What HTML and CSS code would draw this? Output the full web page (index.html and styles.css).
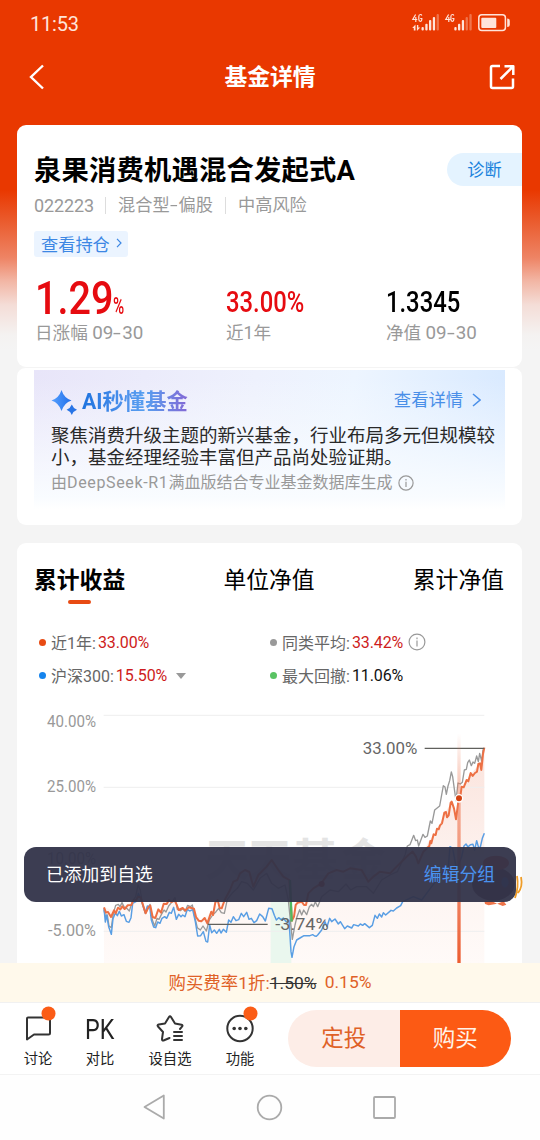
FILE: index.html
```html
<!DOCTYPE html>
<html lang="zh-CN">
<head>
<meta charset="utf-8">
<title>基金详情</title>
<link rel="stylesheet" href="styles.css">
</head>
<body>
<div class="screen">
  <header class="status">
    <span class="clock">11:53</span>
    <svg class="signals" width="100" height="20" viewBox="410 12 100 20">
      <g fill="none" stroke="#ffe4da" stroke-width="1.2">
        <path d="M415.6 14.5L412.8 19.5H417.3M415.8 17V22M421.8 15.5Q421.5 14.5 420.4 14.5Q418.8 14.5 418.8 16.5V19.3Q418.8 21.3 420.4 21.3Q421.8 21.3 421.8 19.5V18.5H420.2"/>
        <path d="M448.6 14.5L445.8 19.5H450.3M448.8 17V22M453.8 15.5Q453.5 14.5 452.4 14.5Q450.9 14.5 450.9 16.5V19.3Q450.9 21.3 452.4 21.3Q453.8 21.3 453.8 19.5V18.5H452.2"/>
      </g>
      <g fill="#ffe4da">
        <path d="M412.2 28L415.5 24.4V30.5H413.8V28ZM420.2 27.5L416.9 31V25H418.3V27.5Z"/>
        <rect x="421.5" y="27" width="2.3" height="3.5" rx="1"/><rect x="425.3" y="23.7" width="2.3" height="6.8" rx="1"/><rect x="429" y="20" width="2.3" height="10.5" rx="1"/><rect x="432.8" y="17" width="2.3" height="13.5" rx="1"/>
        <rect x="454.3" y="27" width="2.3" height="3.5" rx="1"/><rect x="458" y="23.7" width="2.3" height="6.8" rx="1"/><rect x="461.8" y="20" width="2.3" height="10.5" rx="1"/>
        <g opacity=".35"><rect x="436.6" y="14" width="2.3" height="16.5" rx="1"/><rect x="465.6" y="17" width="2.3" height="13.5" rx="1"/><rect x="469.4" y="14" width="2.3" height="16.5" rx="1"/></g>
        <rect x="481.3" y="17.7" width="15" height="10.3" rx="1"/><path d="M507.2 18.5q2.6 0 2.6 2.5v3.5q0 2.5-2.6 2.5z"/>
      </g>
      <rect x="478.8" y="14.8" width="26.6" height="15.6" rx="3" fill="none" stroke="#ffe4da" stroke-width="1.5"/>
    </svg>
  </header>
  <nav class="nav">
    <svg width="16" height="26" viewBox="0 0 16 26" fill="none" stroke="#fff" stroke-width="2.4"><path d="M14 1.5L2 13L14 24.5"/></svg>
    <h1 class="nav-title">基金详情</h1>
    <svg width="26" height="26" viewBox="0 0 26 26" fill="none" stroke="#fff" stroke-width="2.5" stroke-linejoin="round"><path d="M11 2H3.5Q2 2 2 3.5V22.5Q2 24 3.5 24H22.5Q24 24 24 22.5V14.5"/><path d="M11.5 15L23.5 3M15.5 2.2H24.3V11"/></svg>
  </nav>

  <main class="content">
    <section class="card summary">
      <div class="title-row"><h2 class="fund-name">泉果消费机遇混合发起式A</h2><a class="diagnose">诊断</a></div>
      <div class="meta"><span class="code">022223</span><span class="kind">混合型<i class="dash">-</i>偏股</span><span class="risk">中高风险</span></div>
      <a class="holding">查看持仓<svg width="6" height="10" viewBox="0 0 6 10" fill="none" stroke="#3c87e4" stroke-width="1.2"><path d="M1 .8L5 5L1 9.2"/></svg></a>
      <div class="stats">
        <div class="stat"><div class="value red"><b class="big">1.29</b><b class="pct">%</b></div><div class="label">日涨幅 <i>09<em>-</em>30</i></div></div>
        <div class="stat"><div class="value red"><b class="mid">33.00%</b></div><div class="label">近1年</div></div>
        <div class="stat"><div class="value"><b class="mid">1.3345</b></div><div class="label">净值 <i>09<em>-</em>30</i></div></div>
      </div>
    </section>

    <section class="card ai">
      <div class="ai-box">
        <div class="ai-head">
          <svg width="27" height="26" viewBox="0 0 27 26"><defs><linearGradient id="spark"><stop offset="0" stop-color="#55a0ff"/><stop offset="1" stop-color="#216ee9"/></linearGradient></defs><path fill="url(#spark)" d="M10.5 0Q13 8 20.5 10.5Q13 13 10.5 21Q8 13 .5 10.5Q8 8 10.5 0Z"/><path fill="#2874e6" d="M20.8 14.5Q22.2 18.3 26 19.7Q22.2 21.1 20.8 25Q19.4 21.1 15.6 19.7Q19.4 18.3 20.8 14.5Z"/></svg>
          <span class="ai-title">AI秒懂基金</span>
          <a class="ai-more">查看详情<svg width="9" height="14" viewBox="0 0 9 14" fill="none" stroke="#4a8fe8" stroke-width="1.5"><path d="M1 1L8 7L1 13"/></svg></a>
        </div>
        <p class="ai-text">聚焦消费升级主题的新兴基金，行业布局多元但规模较<br>小，基金经理经验丰富但产品尚处验证期。</p>
        <div class="ai-source"><span>由<i>DeepSeek-R1</i>满血版结合专业基金数据库生成</span><svg width="16" height="16" viewBox="0 0 16 16" fill="none" stroke="#999" stroke-width="1.2"><circle cx="8" cy="8" r="7.1"/><path d="M8 6.8V12M8 4V5.5"/></svg></div>
      </div>
    </section>

    <section class="card trend">
      <div class="tabs"><a class="tab active">累计收益</a><a class="tab">单位净值</a><a class="tab">累计净值</a></div>
      <div class="legend">
        <div class="item"><i class="dot orange"></i><span>近1年:</span><b class="red">33.00%</b></div>
        <div class="item"><i class="dot grey"></i><span>同类平均:</span><b class="red">33.42%</b><svg class="info" width="18" height="18" viewBox="0 0 18 18" fill="none" stroke="#999" stroke-width="1.2"><circle cx="9" cy="9" r="7.9"/><path d="M9 7.6V13.5M9 4.5V6.2"/></svg></div>
        <div class="item"><i class="dot blue"></i><span>沪深300:</span><b class="red">15.50%</b><i class="caret"></i></div>
        <div class="item"><i class="dot green"></i><span>最大回撤:</span><b>11.06%</b></div>
      </div>
      <svg class="chart" width="505" height="263" viewBox="51 0 1515 789">
        <defs>
          <linearGradient id="area" x1="0" y1="0" x2="0" y2="1"><stop offset="0" stop-color="#fbe3dc"/><stop offset=".6" stop-color="#fdf4f1"/><stop offset="1" stop-color="#fffaf8"/></linearGradient>
          <linearGradient id="beam" x1="0" y1="0" x2="0" y2="1"><stop offset="0" stop-color="#ee7651" stop-opacity="0"/><stop offset=".3" stop-color="#ee7651" stop-opacity=".55"/><stop offset="1" stop-color="#ec5c30"/></linearGradient>
        </defs>
        <path fill="url(#area)" d="M312 622L345 632L405 600L420 590L437 640L466 655L492 612L526 590L536 630L580 625L604 664L634 635L690 570L735 510L800 500L868 540L876 660L893 608L925 580L975 525L1030 515L1105 545L1170 520L1238 455L1255 490L1285 425L1300 405L1318 375L1334 340L1356 305L1368 355L1384 270L1415 220L1440 190L1453 143V789H312Z"/>
        <rect x="812" y="560" width="62" height="229" fill="#eaf7ee"/>
        <path d="M311 46H1453M311 262H1453M311 478H1453M311 694H1453" stroke="#eee" stroke-width="3"/>
        <text class="mark" x="614 742 878 1024" y="528">天天基金</text>
        <g class="axis"><text x="141" y="81" textLength="147" lengthAdjust="spacingAndGlyphs">40.00%</text><text x="141" y="277" textLength="147" lengthAdjust="spacingAndGlyphs">25.00%</text><text x="141" y="493" textLength="147" lengthAdjust="spacingAndGlyphs">10.00%</text><text x="144" y="709" textLength="144" lengthAdjust="spacingAndGlyphs">-5.00%</text></g>
        <g fill="none" stroke-linejoin="round">
          <path stroke="#999" stroke-width="4" d="M312 630L317 652L322 645L327 678L334 683L340 640L347 616L355 613L360 620L366 608L373 622L380 625L388 633L397 605L407 590L414 555L421 570L427 612L436 640L444 625L450 613L457 660L464 678L471 655L477 658L484 644L492 630L498 636L506 618L517 605L525 592L532 628L541 632L548 626L555 634L563 616L571 620L577 615L584 650L592 683L601 690L609 678L619 693L628 660L638 645L648 635L656 625L664 638L673 640L682 598L696 580L712 565L725 545L742 550L760 570L780 535L800 520L815 550L835 565L855 555L865 600L872 670L877 718L885 675L891 650L899 629L905 645L911 630L920 644L928 620L935 613L940 620L946 605L953 620L965 590L990 570L1015 575L1038 552L1052 570L1070 560L1100 560L1120 580L1145 540L1170 525L1192 515L1215 465L1222 438L1230 434L1241 406L1247 422L1252 420L1256 438L1269 403L1275 412L1282 408L1291 363L1296 370L1304 330L1319 318L1330 257L1335 261L1339 283L1344 258L1349 242L1354 216L1358 230L1362 260L1368 302L1374 249L1381 252L1387 247L1393 210L1399 208L1403 188L1408 180L1414 197L1419 186L1424 190L1430 168L1435 185L1439 160L1445 183L1449 150L1453 145"/>
          <path stroke="#599ee4" stroke-width="4.4" d="M312 625L316 666L320 645L326 680L334 703L339 656L346 639L352 647L358 634L364 648L372 644L379 664L387 667L393 653L398 610L408 605L415 580L424 600L436 638L442 618L449 620L454 660L461 681L467 683L473 666L480 670L486 655L494 650L500 655L508 637L514 640L521 622L529 658L536 643L543 650L548 645L555 650L562 628L569 633L578 629L586 665L593 708L602 707L610 695L618 724L623 726L629 675L635 698L643 690L650 700L658 688L663 699L670 688L679 697L686 660L693 667L700 650L708 662L716 659L724 640L731 650L740 637L747 658L754 655L762 668L770 662L779 642L788 650L796 663L806 625L816 626L823 646L829 660L836 653L843 659L850 654L858 665L867 661L873 755L876 772L882 740L890 720L900 714L912 707L930 707L938 704L944 708L949 709L953 705L965 690L975 665L981 680L989 655L995 665L1005 657L1015 672L1021 665L1034 686L1042 678L1055 684L1061 674L1075 678L1081 672L1088 676L1094 671L1108 683L1117 676L1125 646L1132 655L1138 642L1145 651L1150 638L1157 645L1173 631L1180 633L1190 624L1202 617L1208 605L1240 590L1265 600L1295 560L1315 535L1345 500L1350 440L1358 445L1370 510L1385 470L1392 438L1398 432L1404 441L1411 434L1419 433L1424 450L1430 422L1435 440L1440 445L1447 415L1453 400"/>
          <path stroke="#ed7044" stroke-width="6" d="M312 622L318 638L324 636L333 651L342 631L347 640L354 623L361 628L367 619L374 627L383 616L394 615L400 601L408 600L414 590L422 592L429 615L437 640L445 622L451 617L458 651L466 654L475 628L483 638L491 611L500 612L507 600L514 606L524 602L530 614L536 630L548 624L556 632L566 622L582 626L588 651L596 662L604 664L614 654L622 670L634 635L639 645L646 607L653 600L659 624L665 625L674 600L690 570L700 545L712 540L720 520L735 510L748 516L760 560L775 525L800 500L815 480L835 510L850 530L868 540L876 662L882 650L887 615L893 608L905 605L912 615L918 615L925 580L940 565L964 550L985 520L1010 510L1030 515L1050 505L1085 510L1105 545L1120 530L1140 515L1170 520L1190 500L1210 480L1225 465L1238 455L1248 470L1255 490L1270 455L1288 438L1291 423L1294 430L1301 403L1307 405L1311 386L1316 388L1320 376L1326 370L1333 338L1338 336L1341 352L1346 346L1352 308L1355 305L1362 325L1368 358L1375 305L1380 297L1385 260L1391 262L1400 240L1405 244L1412 219L1418 228L1425 219L1431 215L1435 192L1440 190L1444 210L1449 162L1453 143"/>
          <path stroke="#50b960" stroke-width="7" d="M870 540L875 665"/>
          <path stroke="#60605c" stroke-width="3.5" d="M1274 145H1453M623 673H803"/>
        </g>
        <text class="note" x="1088" y="162" textLength="164" lengthAdjust="spacingAndGlyphs">33.00%</text>
        <text class="note" x="826" y="691" textLength="160" lengthAdjust="spacingAndGlyphs">-3.74%</text>
        <rect x="1372" y="100" width="10" height="689" fill="url(#beam)"/>
        <circle cx="1377" cy="295" r="11" fill="#d34313" stroke="#fff" stroke-width="4"/>
        <circle cx="965" cy="552" r="9" fill="#d34313"/>
        <g><ellipse cx="1480" cy="552" rx="64" ry="50" fill="#65443d"/><ellipse cx="1488" cy="489" rx="39" ry="22" fill="#dd5534"/><ellipse cx="1515" cy="547" rx="11" ry="16" fill="#365ca8"/><path fill="#ed7348" d="M1453 603H1475L1491 611L1511 604L1519 614L1508 618L1492 611L1466 616L1455 612Z"/></g>
      </svg>
      <svg class="tail" width="14" height="36" viewBox="514 870 14 36" fill="none" stroke="#ef9d28" stroke-width="1.8"><path d="M517 876Q519 887 515 898M521 877Q523 887 518 893"/></svg>
    </section>
  </main>

  <aside class="toast"><span>已添加到自选</span><a>编辑分组</a></aside>

  <div class="fee"><span>购买费率1折:<s>1.50%</s></span><span>0.15%</span></div>
  <footer class="actions">
    <a class="action"><svg width="36" height="38" viewBox="20 1005 36 38" fill="none" stroke="#333" stroke-width="2" stroke-linejoin="round"><path d="M28 1017.5H48.5Q50 1017.5 50 1019V1033Q50 1034.5 48.5 1034.5H34L27 1039.5V1018.5Q27 1017.5 28 1017.5Z"/><circle cx="48.5" cy="1013.5" r="7" fill="#fb5c16" stroke="none"/></svg><span>讨论</span></a>
    <a class="action"><b class="pk">PK</b><span>对比</span></a>
    <a class="action"><svg width="36" height="38" viewBox="152 1005 36 38" fill="none" stroke="#333" stroke-width="2" stroke-linejoin="round" stroke-linecap="round"><path d="M169.5 1038L163.5 1040.5Q162 1041 162 1039L163 1032L158 1026.5Q156.8 1025 158.8 1024.5L165 1023.5L169 1017Q170 1015.5 171 1017L175 1023.5L181.5 1024.8Q183.2 1025.3 182 1026.7L180 1029M174 1032H182M174 1036H182M174 1040H182"/></svg><span>设自选</span></a>
    <a class="action"><svg width="36" height="38" viewBox="222 1005 36 38"><circle cx="240" cy="1028.5" r="12.7" fill="none" stroke="#333" stroke-width="2"/><g fill="#333"><circle cx="234.2" cy="1028.5" r="1.8"/><circle cx="240" cy="1028.5" r="1.8"/><circle cx="245.8" cy="1028.5" r="1.8"/></g><circle cx="250.5" cy="1013.5" r="7" fill="#fb5c16"/></svg><span>功能</span></a>
    <div class="buttons"><a class="plan">定投</a><a class="buy">购买</a></div>
  </footer>
  <nav class="system">
    <svg width="24" height="27" viewBox="0 0 24 27"><path d="M20.8 1.5V24.5L1.5 13Z"/></svg>
    <svg width="27" height="27" viewBox="0 0 27 27"><circle cx="13.5" cy="13.5" r="11.8"/></svg>
    <svg width="25" height="25" viewBox="0 0 25 25"><rect x="2" y="2" width="21" height="21" rx="1"/></svg>
  </nav>
</div>
</body>
</html>
```
FILE: styles.css
```css
* { box-sizing: border-box; }
body { margin: 0; font-family: Roboto, "Noto Sans CJK SC", sans-serif; color: #000; }
h1, h2, p { margin: 0; }
b, i, em { font-weight: 400; font-style: normal; }
svg { flex: none; display: block; }
.screen { position: relative; width: 540px; height: 1140px; display: flex; flex-direction: column; overflow: hidden;
  background: linear-gradient(#e93800 0, #e93800 190px, #ea5a2c 220px, #ee8465 258px, #f2b4a2 280px, #f4ddd7 305px, #f4f2f1 335px, #f4f4f4 350px); }
.status { height: 46px; flex: none; display: flex; justify-content: space-between; align-items: center; padding: 0 30px 0 30px; }
.clock { color: #ffe4da; font-size: 20px; line-height: 24px; letter-spacing: -.2px; padding-top: 2px; }
.signals { margin-top: -2px; }
.nav { height: 62px; flex: none; display: flex; justify-content: space-between; align-items: center; padding: 0 25px 0 29px; color: #fff; }
.nav-title { font-size: 22.8px; line-height: 30px; font-weight: 700; padding: 1px 0 0 6px; }
.content { flex: none; height: 855px; padding: 17px 18px 0 17px; overflow: hidden; }
.card { background: #fff; border-radius: 9px; }
.red { color: #e60b10; }
.summary { height: 242px; padding-top: 25px; }
.title-row { height: 39px; display: flex; align-items: center; justify-content: space-between; padding-left: 17px; }
.fund-name { padding-top: 3px; font-size: 27.3px; line-height: 39px; font-weight: 700; letter-spacing: .2px; white-space: nowrap; }
.diagnose { width: 75px; height: 33px; line-height: 34px; border-radius: 17px 0 0 17px; background: #e4f3ff; color: #1982dc; font-size: 17.2px; text-align: center; }
.meta { height: 32px; display: flex; align-items: center; padding-left: 17px; color: #999; font-size: 17.2px; white-space: nowrap; }
.code { width: 71px; font-size: 18px; letter-spacing: -.1px; }
.kind, .risk { border-left: 1px solid #ddd; line-height: 17px; padding-left: 12px; }
.kind { width: 120px; }
.dash { display: inline-block; width: 9px; transform: scaleX(1.6); transform-origin: left; }
.holding { display: flex; align-items: center; gap: 6px; width: 94px; height: 26px; margin: 10px 0 0 17px; padding: 0 0 2px 7px; border-radius: 3px; background: #ebf4ff; color: #3c87e4; font-size: 17.2px; }
.stats { display: flex; padding-left: 18px; }
.stat { flex: none; width: 160px; }
.stat:first-child { width: 191px; }
.stat:last-child { width: 118px; }
.value { height: 64px; line-height: 83px; white-space: nowrap; }
.value b { display: inline-block; transform-origin: left; font-weight: 500; }
.big { width: 78px; font-size: 46px; transform: scaleX(.86); }
.pct { font-size: 23px; transform: scaleX(.66); }
.mid { font-size: 29px; line-height: 90px; transform: scaleX(.82); }
.label { font-size: 17.6px; line-height: 24px; color: #999; white-space: nowrap; }
.label i { font-size: 18.8px; }
.label em { display: inline-block; width: 9px; transform: scaleX(1.5); transform-origin: left; }
.ai { height: 158px; margin-top: 0; padding: 2px 17px 17px; border-top: 1px solid #f4f4f4; }
.ai-box { height: 139px; padding: 18px 8px 0 17px;
  background: linear-gradient(to bottom, transparent 5%, #f9fcff 92%, #fff), linear-gradient(100deg, #e8e5f9, #eef1fd 45%, #edf5ff 65%, #d6e8ff); }
.ai-head { height: 28px; display: flex; align-items: center; }
.ai-head > svg { margin-top: 2px; }
.ai-title { margin-left: 4px; font-size: 21.3px; line-height: 28px; font-weight: 700; color: transparent; background: linear-gradient(90deg, #1e73df, #4d91ec 40%, #579ff0 60%, #8368d5); -webkit-background-clip: text; background-clip: text; }
.ai-more { display: flex; align-items: center; gap: 9px; margin: -7px 16px 0 auto; color: #4a8fe8; font-size: 17.3px; }
.ai-more svg { margin-top: 3px; }
.ai-text { margin-top: 9px; font-size: 18.5px; line-height: 22px; color: #292929; white-space: nowrap; }
.ai-source { display: flex; align-items: center; gap: 5px; margin-top: 2px; color: #999; font-size: 16px; line-height: 24px; white-space: nowrap; }
.ai-source i { letter-spacing: .65px; }
.trend { position: relative; height: 430px; margin-top: 18px; padding-top: 20px; }
.tabs { display: flex; justify-content: space-between; height: 42px; padding: 0 18px 0 17px; }
.tab { display: flex; flex-direction: column; align-items: center; padding-top: 1px; font-size: 22.8px; line-height: 34px; white-space: nowrap; }
.active { font-weight: 700; }
.active::after { content: ""; width: 23px; height: 4px; margin-top: 2px; border-radius: 2px; background: #e84b13; }
.legend { display: grid; grid-template-columns: 231px 1fr; grid-template-rows: 33px 33px; padding: 21px 0 0 21px; height: 95px; }
.item { display: flex; align-items: center; font-size: 16px; color: #666; white-space: nowrap; }
.item span { padding-bottom: 2px; }
.item b { margin-left: 2px; color: #111; letter-spacing: -.1px; }
.item b.red { color: #ce1c20; }
.dot { width: 7px; height: 7px; margin: 0 5px 1px 1px; border-radius: 50%; }
.orange { background: #e84b13; } .grey { background: #999; } .blue { background: #1684ed; } .green { background: #59c363; }
.info { margin-left: 5px; margin-bottom: 2px; }
.caret { margin-left: 9px; border: 5px solid transparent; border-top: 6px solid #999; border-bottom: 0; }
.chart { display: block; }
.axis { font-size: 49px; fill: #999; }
.note { font-size: 52px; fill: #666; }
.mark { font-size: 134px; font-weight: 700; fill: #e4e4e4; }
.tail { position: absolute; left: 497px; top: 327px; }
.toast { position: absolute; left: 24px; top: 847px; width: 492px; height: 55px; padding: 0 21px 3px 22px; display: flex; align-items: center; justify-content: space-between; border-radius: 12px; background: rgba(49, 51, 73, .95); color: #fff; font-size: 17.8px; }
.toast a { color: #4a92ef; }
.fee { flex: none; height: 40px; padding-bottom: 2px; display: flex; align-items: center; justify-content: center; gap: 8px; background: #fff9eb; color: #df6127; font-size: 17.4px; letter-spacing: .05px; border-bottom: 1px solid #f1f1f1; }
.fee s { color: #333; }
.actions { flex: none; height: 72px; display: flex; align-items: flex-start; padding-left: 3px; background: #fff; border-bottom: 1px solid #f3f3f3; }
.action { width: 70px; height: 70px; display: flex; flex-direction: column; align-items: center; padding-top: 2px; color: #222; font-size: 14.3px; white-space: nowrap; }
.action span { line-height: 20px; margin-top: 6px; }
.action:nth-child(2) { width: 54px; }
.action:nth-child(3) { width: 86px; }
.action:nth-child(4) { width: 54px; }
.pk { height: 38px; font-size: 28px; line-height: 50px; transform: scaleX(.83); }
.buttons { display: flex; width: 223px; height: 57px; margin: 7px 0 0 21px; border-radius: 29px; overflow: hidden; font-size: 22.5px; line-height: 57px; text-align: center; }
.plan { flex: 1; background: #fdede7; color: #df6127; }
.buy { flex: 1; background: #fc5a14; color: #fff3e8; }
.system { flex: 1; display: flex; align-items: center; padding-left: 143px; gap: 89px; background: #fefefe; fill: none; stroke: #aaa; stroke-width: 1.8; stroke-linejoin: round; }
```
